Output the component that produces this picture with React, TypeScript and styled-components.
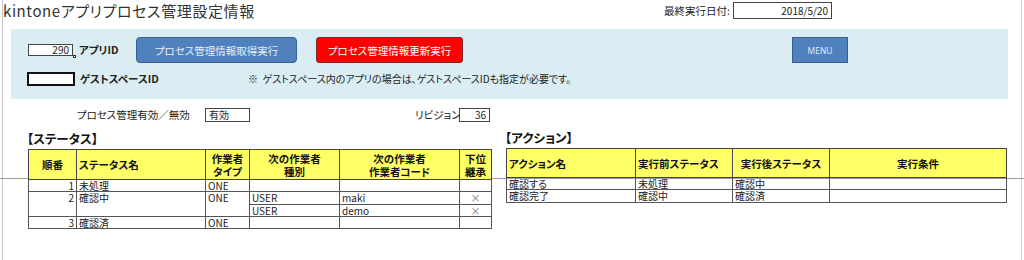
import React from "react";
import styled, { createGlobalStyle } from "styled-components";

const Global = createGlobalStyle`
  html, body { margin: 0; padding: 0; background: #fff; }
  body {
    font-family: "Noto Sans CJK JP", "Noto Sans", sans-serif;
    color: #222;
    font-feature-settings: "palt";
  }
  * { box-sizing: border-box; }
`;

const Page = styled.div`
  width: 1024px;
  height: 260px;
  overflow: hidden;
  display: flex;
  flex-direction: column;
  background:
    linear-gradient(#9a9a9a, #9a9a9a) 0 178px / 100% 1px no-repeat,
    linear-gradient(#c8c8c8, #c8c8c8) 2px 0 / 1px 100% no-repeat,
    linear-gradient(#d4d4d4, #d4d4d4) 1021px 0 / 1px 100% no-repeat,
    #fff;
`;

const Header = styled.div`
  display: flex;
  align-items: flex-start;
  height: 29px;
`;

const Title = styled.h1`
  margin: 0 0 0 3px;
  font-size: 15px;
  font-weight: 400;
  line-height: 22px;
  letter-spacing: 0.6px;
  color: #333;
`;

const DateGroup = styled.div`
  margin: 2px 192px 0 auto;
  display: flex;
  align-items: center;
  height: 17px;
`;

const SmallText = styled.span<{ $bold?: boolean; $w?: number; $size?: number }>`
  font-size: ${(p) => p.$size ?? 10.5}px;
  line-height: 14px;
  font-weight: ${(p) => (p.$bold ? 700 : 400)};
  white-space: nowrap;
  ${(p) => (p.$w ? `width: ${p.$w}px; flex: none;` : "")}
`;

const ValueBox = styled.div<{ $w: number; $h?: number; $align?: string; $thick?: boolean }>`
  width: ${(p) => p.$w}px;
  height: ${(p) => p.$h ?? 14}px;
  flex: none;
  border: ${(p) => (p.$thick ? "2px solid #111" : "1px solid #444")};
  background: #fff;
  text-align: ${(p) => p.$align ?? "right"};
  font-size: 10px;
  line-height: ${(p) => (p.$h ?? 14) - 2}px;
  padding: 0 3px;
  white-space: nowrap;
  position: relative;
`;

const Handle = styled.span`
  position: absolute;
  right: -4px;
  bottom: -3px;
  width: 3px;
  height: 3px;
  border: 1px solid #333;
  background: #fff;
`;

const Panel = styled.div`
  margin-left: 11px;
  width: 997px;
  height: 70px;
  background: #daedf3;
  padding: 8px 0 0 17px;
  display: flex;
  flex-direction: column;
`;

const PanelRow = styled.div<{ $top?: number; $h: number; $indent?: number }>`
  display: flex;
  align-items: center;
  height: ${(p) => p.$h}px;
  margin-top: ${(p) => p.$top ?? 0}px;
  margin-left: ${(p) => p.$indent ?? 0}px;
`;

const Spacer = styled.div<{ $w: number }>`
  width: ${(p) => p.$w}px;
  flex: none;
`;

const ActionButton = styled.button<{ $variant: "blue" | "red" | "menu"; $w: number }>`
  width: ${(p) => p.$w}px;
  height: 26px;
  flex: none;
  padding: 0;
  border: 1px solid
    ${(p) => (p.$variant === "red" ? "#7a2a2a" : "#3b5f8e")};
  border-radius: ${(p) => (p.$variant === "menu" ? 0 : p.$variant === "red" ? 3 : 4)}px;
  background: ${(p) => (p.$variant === "red" ? "#ff0000" : "#4f81bd")};
  color: ${(p) => (p.$variant === "red" ? "#fff" : "#e6edf7")};
  font-family: ${(p) =>
    p.$variant === "menu"
      ? `"Open Sans", "Liberation Sans", sans-serif`
      : `"Noto Sans CJK JP", sans-serif`};
  font-size: ${(p) => (p.$variant === "menu" ? 8.5 : 10.5)}px;
  font-feature-settings: "palt";
  cursor: pointer;
`;

const OptionsRow = styled.div`
  display: flex;
  align-items: center;
  height: 14px;
  margin-top: 9px;
  padding-left: 77px;
`;

const Tables = styled.div`
  display: flex;
  align-items: flex-start;
  padding-left: 28px;
  margin-top: 6px;
`;

const Column = styled.div<{ $w: number; $ml?: number }>`
  width: ${(p) => p.$w}px;
  margin-left: ${(p) => p.$ml ?? 0}px;
  display: flex;
  flex-direction: column;
`;

const SectionTitle = styled.div<{ $h: number }>`
  font-size: 12.5px;
  font-weight: 700;
  line-height: ${(p) => p.$h}px;
  height: ${(p) => p.$h}px;
  margin-left: -1px;
  color: #111;
`;

const Table = styled.table`
  border-collapse: collapse;
  table-layout: fixed;
  width: 100%;
  border: 1px solid #333;
  font-size: 10px;
`;

const Th = styled.th<{ $align?: string; $h: number }>`
  background: #ffff66;
  border: 1px solid #444;
  height: ${(p) => p.$h}px;
  padding: 0 2px;
  font-weight: 700;
  font-size: 10.5px;
  line-height: 13px;
  text-align: ${(p) => p.$align ?? "center"};
  vertical-align: middle;
  white-space: nowrap;
  color: #111;
`;

const Td = styled.td<{ $align?: string; $top?: boolean }>`
  border: 1px solid #555;
  height: 12.3px;
  padding: 0 2px;
  line-height: 11px;
  font-size: 10px;
  text-align: ${(p) => p.$align ?? "left"};
  vertical-align: ${(p) => (p.$top ? "top" : "middle")};
  white-space: nowrap;
  color: #222;
`;

const Cross = styled.span`
  display: inline-block;
  color: #777;
  font-size: 10px;
  line-height: 10px;
`;

const statusCols = [48, 129, 44, 90, 120, 32];
const actionCols = [129, 97, 97, 177];

const actions = [
  ["確認する", "未処理", "確認中", ""],
  ["確認完了", "確認中", "確認済", ""],
];

export default function App() {
  return (
    <>
      <Global />
      <Page>
        <Header>
          <Title>kintoneアプリプロセス管理設定情報</Title>
          <DateGroup>
            <SmallText style={{ marginRight: 3 }}>最終実行日付:</SmallText>
            <ValueBox $w={99} $h={17}>
              2018/5/20
            </ValueBox>
          </DateGroup>
        </Header>

        <Panel>
          <PanelRow $h={26}>
            <ValueBox $w={45} $h={12}>
              290
              <Handle />
            </ValueBox>
            <Spacer $w={6} />
            <SmallText $bold $w={57}>
              アプリID
            </SmallText>
            <ActionButton $variant="blue" $w={161}>
              プロセス管理情報取得実行
            </ActionButton>
            <Spacer $w={19} />
            <ActionButton $variant="red" $w={147}>
              プロセス管理情報更新実行
            </ActionButton>
            <Spacer $w={329} />
            <ActionButton $variant="menu" $w={56}>
              MENU
            </ActionButton>
          </PanelRow>
          <PanelRow $h={14} $top={9} $indent={-1}>
            <ValueBox $w={48} $thick />
            <Spacer $w={5} />
            <SmallText $bold $w={168}>
              ゲストスペースID
            </SmallText>
            <SmallText $size={10}>
              ※&nbsp;&nbsp;ゲストスペース内のアプリの場合は、ゲストスペースIDも指定が必要です。
            </SmallText>
          </PanelRow>
        </Panel>

        <OptionsRow>
          <SmallText $w={128}>プロセス管理有効／無効</SmallText>
          <ValueBox $w={45} $align="left">
            有効
          </ValueBox>
          <Spacer $w={165} />
          <SmallText $w={44}>リビジョン</SmallText>
          <ValueBox $w={31}>36</ValueBox>
        </OptionsRow>

        <Tables>
          <Column $w={463}>
            <SectionTitle $h={21}>【ステータス】</SectionTitle>
            <Table>
              <colgroup>
                {statusCols.map((w, i) => (
                  <col key={i} style={{ width: w }} />
                ))}
              </colgroup>
              <thead>
                <tr>
                  <Th $h={30}>順番</Th>
                  <Th $h={30} $align="left">
                    ステータス名
                  </Th>
                  <Th $h={30}>
                    作業者
                    <br />
                    タイプ
                  </Th>
                  <Th $h={30}>
                    次の作業者
                    <br />
                    種別
                  </Th>
                  <Th $h={30}>
                    次の作業者
                    <br />
                    作業者コード
                  </Th>
                  <Th $h={30}>
                    下位
                    <br />
                    継承
                  </Th>
                </tr>
              </thead>
              <tbody>
                <tr>
                  <Td $align="right">1</Td>
                  <Td>未処理</Td>
                  <Td>ONE</Td>
                  <Td />
                  <Td />
                  <Td />
                </tr>
                <tr>
                  <Td $align="right" rowSpan={2} $top>
                    2
                  </Td>
                  <Td rowSpan={2} $top>
                    確認中
                  </Td>
                  <Td rowSpan={2} $top>
                    ONE
                  </Td>
                  <Td>USER</Td>
                  <Td>maki</Td>
                  <Td $align="center">
                    <Cross>×</Cross>
                  </Td>
                </tr>
                <tr>
                  <Td>USER</Td>
                  <Td>demo</Td>
                  <Td $align="center">
                    <Cross>×</Cross>
                  </Td>
                </tr>
                <tr>
                  <Td $align="right">3</Td>
                  <Td>確認済</Td>
                  <Td>ONE</Td>
                  <Td />
                  <Td />
                  <Td />
                </tr>
              </tbody>
            </Table>
          </Column>

          <Column $w={500} $ml={15}>
            <SectionTitle $h={20}>【アクション】</SectionTitle>
            <Table>
              <colgroup>
                {actionCols.map((w, i) => (
                  <col key={i} style={{ width: w }} />
                ))}
              </colgroup>
              <thead>
                <tr>
                  <Th $h={29} $align="left">
                    アクション名
                  </Th>
                  <Th $h={29} $align="left">
                    実行前ステータス
                  </Th>
                  <Th $h={29}>実行後ステータス</Th>
                  <Th $h={29}>実行条件</Th>
                </tr>
              </thead>
              <tbody>
                {actions.map((row, i) => (
                  <tr key={i}>
                    {row.map((c, j) => (
                      <Td key={j}>{c}</Td>
                    ))}
                  </tr>
                ))}
              </tbody>
            </Table>
          </Column>
        </Tables>
      </Page>
    </>
  );
}
